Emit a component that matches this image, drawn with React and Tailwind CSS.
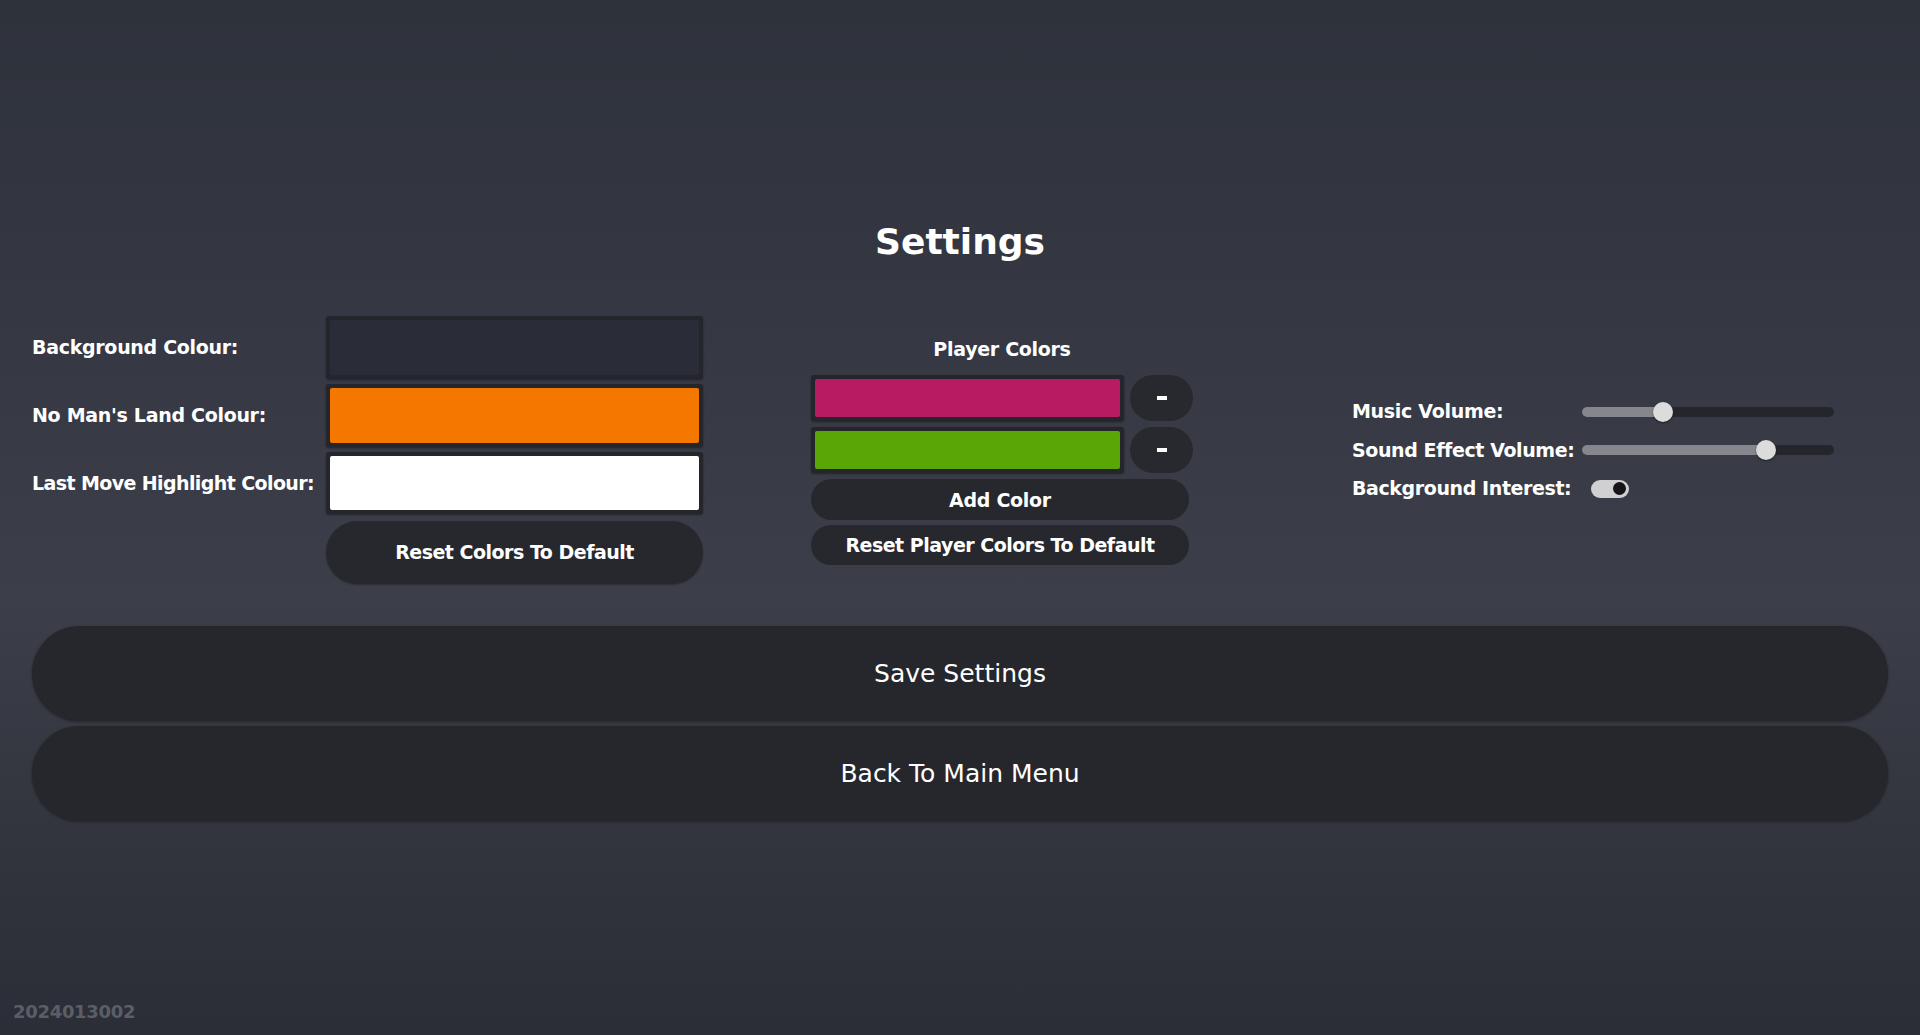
import React from 'react';

const font = { fontFamily: '"DejaVu Sans", Inter, sans-serif' };

const Swatch = ({ color, className = '' }) => (
    <div className={`rounded-[3px] bg-[#24262c] p-[4px] shadow-[0_1px_2px_rgba(0,0,0,0.4)] ${className}`}>
        <div className="h-full w-full rounded-[2px]" style={{ backgroundColor: color }} />
    </div>
);

const Slider = ({ value }) => (
    <div className="relative h-[10px] w-[252px] rounded-full bg-[#25262b]">
        <div className="h-full rounded-full bg-[#86878c]" style={{ width: `${value}%` }} />
        <div
            className="absolute top-1/2 h-[20px] w-[20px] -translate-x-1/2 -translate-y-1/2 rounded-full bg-[#dcdcdc] shadow-[0_1px_2px_rgba(0,0,0,0.5)]"
            style={{ left: `${value}%` }}
        />
    </div>
);

const App = () => {
    return (
        <div
            className="relative flex h-[1035px] w-full flex-col overflow-hidden bg-[linear-gradient(180deg,#2e323b_0%,#353842_30%,#3c3f49_58%,#30333b_85%,#2b2e36_100%)] text-white"
            style={font}
        >
            {/* Title */}
            <h1 className="mt-[216px] text-center text-[36px] font-bold leading-[52px]">Settings</h1>

            {/* Settings columns */}
            <div className="mt-[48px] flex items-center px-8">
                {/* Theme colours */}
                <div className="grid grid-cols-[294px_377px] gap-y-[5px]">
                    <span className="self-center text-[19px] font-bold tracking-[-0.3px]">Background Colour:</span>
                    <Swatch color="#2a2d38" className="h-[63px]" />
                    <span className="self-center text-[19px] font-bold tracking-[-0.3px]">No Man's Land Colour:</span>
                    <Swatch color="#f57700" className="h-[63px]" />
                    <span className="self-center whitespace-nowrap text-[19px] font-bold tracking-[-0.6px]">Last Move Highlight Colour:</span>
                    <Swatch color="#ffffff" className="h-[62px]" />
                    <span />
                    <button className="mt-[2px] h-[63px] rounded-full bg-[#27282d] text-[19px] font-bold tracking-[-0.5px] shadow-[0_1px_2px_rgba(0,0,0,0.3)]">
                        Reset Colors To Default
                    </button>
                </div>

                {/* Player colours */}
                <div className="ml-[108px] flex w-[382px] flex-col">
                    <span className="mb-[12px] text-center text-[19px] font-bold tracking-[-0.3px]">Player Colors</span>
                    <div className="flex items-center gap-[6px]">
                        <Swatch color="#b91b63" className="h-[46px] w-[313px]" />
                        <button className="flex h-[46px] w-[63px] items-center justify-center rounded-full bg-[#28292e]">
                            <span className="h-[4px] w-[10px] bg-white" />
                        </button>
                    </div>
                    <div className="mt-[6px] flex items-center gap-[6px]">
                        <Swatch color="#5aa606" className="h-[46px] w-[313px]" />
                        <button className="flex h-[46px] w-[63px] items-center justify-center rounded-full bg-[#28292e]">
                            <span className="h-[4px] w-[10px] bg-white" />
                        </button>
                    </div>
                    <button className="mt-[6px] h-[41px] w-[378px] rounded-full bg-[#27282d] text-[19px] font-bold tracking-[-0.3px]">Add Color</button>
                    <button className="mt-[5px] h-[40px] w-[378px] rounded-full bg-[#27282d] text-[19px] font-bold tracking-[-0.5px]">
                        Reset Player Colors To Default
                    </button>
                </div>

                {/* Audio & misc */}
                <div className="ml-[159px] grid grid-cols-[230px_252px] items-center gap-y-[10px]">
                    <span className="text-[19px] font-bold tracking-[-0.3px]">Music Volume:</span>
                    <Slider value={32} />
                    <span className="whitespace-nowrap text-[19px] font-bold tracking-[-0.4px]">Sound Effect Volume:</span>
                    <Slider value={73} />
                    <span className="whitespace-nowrap text-[19px] font-bold tracking-[-0.4px]">Background Interest:</span>
                    <div className="ml-[9px] flex h-[18px] w-[38px] items-center justify-end rounded-full bg-[#d0d0d2] pr-[3px]">
                        <span className="h-[13px] w-[13px] rounded-full bg-[#151518]" />
                    </div>
                </div>
            </div>

            {/* Actions */}
            <div className="mt-[42px] flex flex-col gap-[5px] px-8">
                <button className="h-[95px] rounded-full bg-[#26272c] text-[25px] shadow-[0_1px_3px_rgba(0,0,0,0.35)]">
                    Save Settings
                </button>
                <button className="h-[95px] rounded-full bg-[#26272c] text-[25px] shadow-[0_1px_3px_rgba(0,0,0,0.35)]">
                    Back To Main Menu
                </button>
            </div>

            <span className="absolute bottom-[10px] left-[13px] text-[18px] font-bold tracking-[-0.3px] text-[#5b5e66]">2024013002</span>
        </div>
    );
};

export default App;
